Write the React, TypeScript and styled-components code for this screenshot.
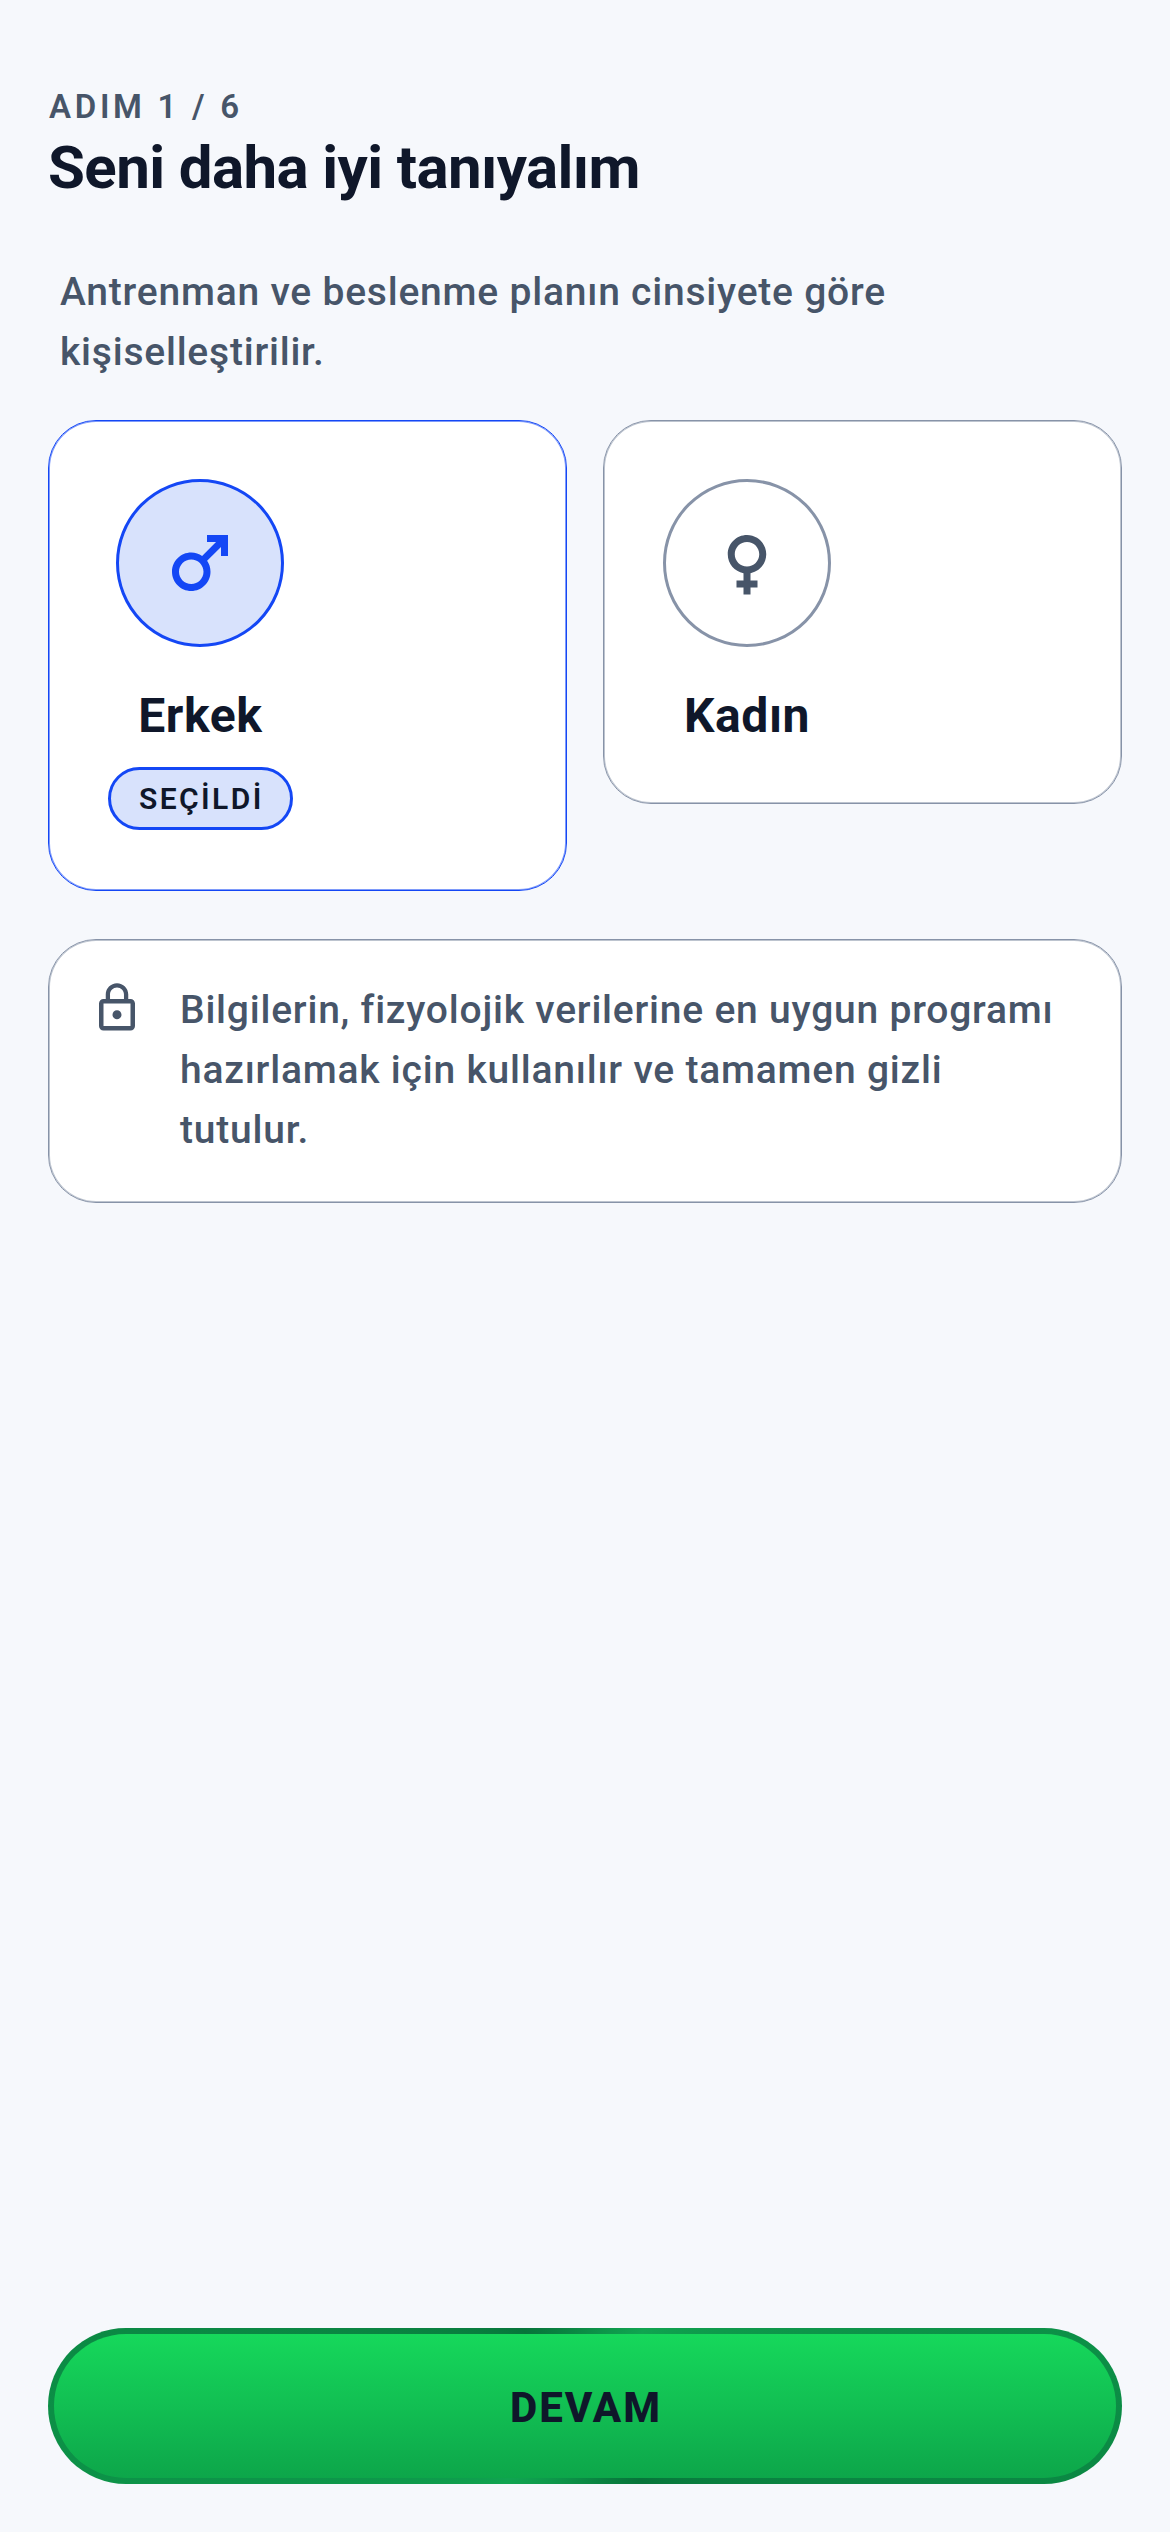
import React from 'react';
import styled, { createGlobalStyle } from 'styled-components';
import { MdFemale, MdLockOutline, MdMale } from 'react-icons/md';

const GlobalStyle = createGlobalStyle`
	* {
		box-sizing: border-box;
	}
	body {
		margin: 0;
		background: #F6F8FC;
		font-family: Roboto, "Liberation Sans", sans-serif;
	}
`;

const App: React.FC = (): JSX.Element => {
	return (
		<Page>
			<GlobalStyle />
			<StepLabel>ADIM 1 / 6</StepLabel>
			<Title>Seni daha iyi tanıyalım</Title>
			<Lead>Antrenman ve beslenme planın cinsiyete göre kişiselleştirilir.</Lead>
			<CardRow>
				<GenderCard $selected>
					<CardBody>
						<IconCircle $selected>
							<MdMale size={84} />
						</IconCircle>
						<GenderName>Erkek</GenderName>
						<SelectedBadge>SEÇİLDİ</SelectedBadge>
					</CardBody>
				</GenderCard>
				<GenderCard>
					<CardBody>
						<IconCircle>
							<MdFemale size={84} />
						</IconCircle>
						<GenderName>Kadın</GenderName>
					</CardBody>
				</GenderCard>
			</CardRow>
			<InfoCard>
				<MdLockOutline size={54} />
				<InfoText>Bilgilerin, fizyolojik verilerine en uygun programı hazırlamak için kullanılır ve tamamen gizli tutulur.</InfoText>
			</InfoCard>
			<ContinueButton>DEVAM</ContinueButton>
		</Page>
	);
};

const Page = styled.div`
	min-height: 2532px;
	display: flex;
	flex-direction: column;
	padding: 86px 48px 48px;
	background: #F6F8FC;
`;

const StepLabel = styled.div`
	padding-left: 1px;
	font-size: 33px;
	line-height: 42px;
	font-weight: 600;
	letter-spacing: 3.7px;
	color: #475569;
`;

const Title = styled.h1`
	margin: 4px 0 0;
	font-size: 60px;
	line-height: 72px;
	font-weight: 700;
	letter-spacing: -0.6px;
	color: #0F172A;
`;

const Lead = styled.p`
	margin: 58px 0 0;
	padding: 0 12px;
	font-size: 39px;
	line-height: 60px;
	font-weight: 500;
	letter-spacing: 0.78px;
	color: #475569;
`;

const CardRow = styled.div`
	display: flex;
	align-items: flex-start;
	gap: 36px;
	margin-top: 38px;
`;

const GenderCard = styled.div<{ $selected?: boolean }>`
	flex: 1;
	display: flex;
	padding: 58px 59px 60px;
	background: #FFFFFF;
	border: 1px solid ${(p) => (p.$selected ? '#1447F5' : '#8793A8')};
	border-radius: 48px;
	box-shadow: inset 0 0 0 1px ${(p) => (p.$selected ? 'rgba(20, 71, 245, 0.55)' : 'rgba(135, 147, 168, 0.55)')};
`;

const CardBody = styled.div`
	display: flex;
	flex-direction: column;
	align-items: center;
`;

const IconCircle = styled.div<{ $selected?: boolean }>`
	width: 168px;
	height: 168px;
	display: flex;
	align-items: center;
	justify-content: center;
	border-radius: 50%;
	border: 3px solid ${(p) => (p.$selected ? '#1447F5' : '#8793A8')};
	background: ${(p) => (p.$selected ? '#D8E2FC' : '#FFFFFF')};
	color: ${(p) => (p.$selected ? '#1447F5' : '#475569')};
`;

const GenderName = styled.div`
	margin-top: 42px;
	font-size: 48px;
	line-height: 54px;
	font-weight: 700;
	letter-spacing: 0.6px;
	color: #0F172A;
`;

const SelectedBadge = styled.div`
	margin-top: 24px;
	height: 63px;
	padding: 0 26px 0 28px;
	display: flex;
	align-items: center;
	border: 3px solid #1447F5;
	border-radius: 32px;
	background: #D8E2FC;
	font-size: 30px;
	font-weight: 600;
	letter-spacing: 2.4px;
	color: #0F172A;
`;

const InfoCard = styled.div`
	display: flex;
	align-items: flex-start;
	gap: 36px;
	margin-top: 48px;
	padding: 40px 48px 42px 41px;
	background: #FFFFFF;
	border: 1px solid #8793A8;
	border-radius: 48px;
	box-shadow: inset 0 0 0 1px rgba(135, 147, 168, 0.55);
	color: #475569;

	svg {
		flex: none;
		margin-top: 1px;
	}
`;

const InfoText = styled.p`
	margin: 0;
	font-size: 39px;
	line-height: 60px;
	font-weight: 500;
	letter-spacing: 0.78px;
	color: #475569;
`;

const ContinueButton = styled.button`
	margin-top: auto;
	height: 156px;
	padding: 3px 0 0 2px;
	border: 6px solid transparent;
	border-radius: 78px;
	background:
		linear-gradient(180deg, #16D85B, #0DA64A) padding-box,
		conic-gradient(from 38deg at 50% 50%, #10A450 0deg, #07743A 105deg, #10A450 188deg, #07743A 283deg, #10A450 360deg) border-box;
	font-family: inherit;
	font-size: 42px;
	font-weight: 800;
	letter-spacing: 2px;
	color: #0F172A;
`;

export default App;
